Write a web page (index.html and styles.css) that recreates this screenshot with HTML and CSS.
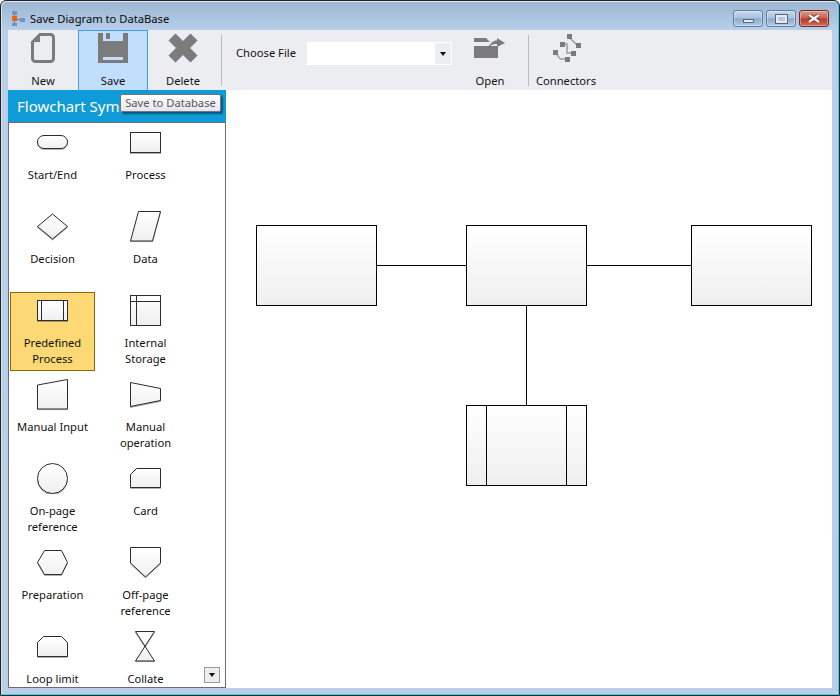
FILE: index.html
```html
<!DOCTYPE html>
<html lang="en">
<head>
<meta charset="utf-8">
<title>Save Diagram to DataBase</title>
<link rel="stylesheet" href="styles.css">
</head>
<body>
<div class="window">
  <header class="titlebar">
    <svg class="app-icon" width="16" height="16" viewBox="0 0 16 16">
      <path class="app-line" d="M3.5 3v10M5 8.5h5"/>
      <rect class="app-blue" x="1" y="0" width="5" height="4"/>
      <rect class="app-orange" x="1" y="5" width="5" height="5"/>
      <rect class="app-blue" x="9" y="7" width="5" height="4"/>
      <rect class="app-blue" x="1" y="12" width="5" height="3"/>
    </svg>
    <span class="title">Save Diagram to DataBase</span>
    <div class="controls">
      <button class="ctl ctl-min"><span class="glyph-min"></span></button>
      <button class="ctl ctl-max"><span class="glyph-max"></span></button>
      <button class="ctl ctl-close">
        <svg width="14" height="9" viewBox="0 0 14 9"><path class="glyph-x-shade" d="M2 1l10 7M12 1L2 8"/><path class="glyph-x" d="M2 1l10 7M12 1L2 8"/></svg>
      </button>
    </div>
  </header>

  <div class="toolbar">
    <div class="tool">
      <svg class="tool-icon" width="32" height="32" viewBox="0 0 32 32">
        <path class="ico-outline" d="M13 2.5H23.5a3 3 0 0 1 3 3V26.500a3 3 0 0 1-3 3H8.500a3 3 0 0 1-3-3V10Z"/>
        <path class="ico-fill" d="M13 2V10H5Z"/>
      </svg>
      <span class="tool-label">New</span>
    </div>
    <div class="tool tool-active">
      <svg class="tool-icon" width="32" height="32" viewBox="0 0 32 32">
        <path class="ico-fill ico-even" d="M1 1H31V31H1ZM6 1V9H26V1H13V7H9V1ZM6 25V28H26V25Z"/>
      </svg>
      <span class="tool-label">Save</span>
    </div>
    <div class="tool">
      <svg class="tool-icon" width="32" height="32" viewBox="0 0 32 32">
        <path class="ico-x" d="M5 5L27 27M27 5L5 27"/>
      </svg>
      <span class="tool-label">Delete</span>
    </div>
    <div class="sep"></div>
    <span class="choose">Choose File</span>
    <div class="combo"><span class="combo-text"></span><span class="combo-btn"><span class="caret"></span></span></div>
    <div class="tool tool-open">
      <svg class="tool-icon" width="32" height="32" viewBox="0 0 32 32">
        <path class="ico-fill" d="M0 6H12L15 9H17L14 10H0Z"/>
        <path class="ico-fill" d="M0 14H15C15.500 12 16 11.500 17 14H24V26H0Z"/>
        <path class="ico-fill" d="M16 14C17 10 20 8.500 23 8.500V6L31 11L23 15V12C20 12 18 12.500 16 14Z"/>
      </svg>
      <span class="tool-label">Open</span>
    </div>
    <div class="sep sep-2"></div>
    <div class="tool tool-conn">
      <svg class="tool-icon" width="32" height="32" viewBox="0 0 32 32">
        <path class="ico-link" d="M19 5L28 14M12 12H17V21H23M5 21C8 21 8 27 11 27H17"/>
        <rect class="ico-fill" x="17" y="2" width="5" height="5"/>
        <rect class="ico-fill" x="26" y="11" width="5" height="5"/>
        <rect class="ico-fill" x="10" y="10" width="5" height="5"/>
        <rect class="ico-fill" x="21" y="19" width="5" height="5"/>
        <rect class="ico-fill" x="3" y="18" width="5" height="5"/>
        <rect class="ico-fill" x="15" y="25" width="5" height="5"/>
      </svg>
      <span class="tool-label">Connectors</span>
    </div>
  </div>

  <div class="workspace">
    <aside class="panel">
      <div class="panel-head">Flowchart Symbols</div>
      <div class="panel-list">
        <div class="symbols">
          <div class="sym"><svg class="sym-icon" width="33" height="32" viewBox="0 0 33 32"><rect class="shape" x="1.500" y="9.500" width="30" height="13" rx="6.500"/></svg><span class="sym-label">Start/End</span></div>
          <div class="sym"><svg class="sym-icon" width="33" height="32" viewBox="0 0 33 32"><rect class="shape" x="1.500" y="6.500" width="30" height="20"/></svg><span class="sym-label">Process</span></div>
          <div class="sym"><svg class="sym-icon" width="33" height="32" viewBox="0 0 33 32"><polygon class="shape" points="16.500,4 31.500,16.500 16.500,29 1.500,16.500"/></svg><span class="sym-label">Decision</span></div>
          <div class="sym"><svg class="sym-icon" width="33" height="32" viewBox="0 0 33 32"><polygon class="shape" points="9.500,1.500 31.500,1.500 23.500,31 1.500,31"/></svg><span class="sym-label">Data</span></div>
          <div class="sym sym-active"><svg class="sym-icon" width="33" height="32" viewBox="0 0 33 32"><rect class="shape" x="1.500" y="6.500" width="30" height="20"/><path class="inner" d="M5.500 6.500V26.500M27.500 6.500V26.500"/></svg><span class="sym-label">Predefined Process</span></div>
          <div class="sym"><svg class="sym-icon" width="33" height="32" viewBox="0 0 33 32"><rect class="shape" x="1.500" y="1.500" width="30" height="30"/><path class="inner" d="M7.500 1.500V31.500M1.500 7.500H31.500"/></svg><span class="sym-label">Internal Storage</span></div>
          <div class="sym"><svg class="sym-icon" width="33" height="32" viewBox="0 0 33 32"><polygon class="shape" points="1.500,7 31.500,1.500 31.500,31 1.500,31"/></svg><span class="sym-label">Manual Input</span></div>
          <div class="sym"><svg class="sym-icon" width="33" height="32" viewBox="0 0 33 32"><polygon class="shape" points="1.500,4.500 31.500,10.500 31.500,22.500 1.500,28.500"/></svg><span class="sym-label">Manual operation</span></div>
          <div class="sym"><svg class="sym-icon" width="33" height="32" viewBox="0 0 33 32"><circle class="shape" cx="16.500" cy="16.500" r="15"/></svg><span class="sym-label">On-page reference</span></div>
          <div class="sym"><svg class="sym-icon" width="33" height="32" viewBox="0 0 33 32"><polygon class="shape" points="7.500,6.500 31.500,6.500 31.500,25.500 1.500,25.500 1.500,12.500"/></svg><span class="sym-label">Card</span></div>
          <div class="sym"><svg class="sym-icon" width="33" height="32" viewBox="0 0 33 32"><polygon class="shape" points="8.500,4.500 25.500,4.500 31.500,16.500 25.500,28.500 8.500,28.500 1.500,16.500"/></svg><span class="sym-label">Preparation</span></div>
          <div class="sym"><svg class="sym-icon" width="33" height="32" viewBox="0 0 33 32"><polygon class="shape" points="1.500,1.500 31.500,1.500 31.500,17 16.500,31 1.500,17"/></svg><span class="sym-label">Off-page reference</span></div>
          <div class="sym"><svg class="sym-icon" width="33" height="32" viewBox="0 0 33 32"><polygon class="shape" points="7.500,6.500 25.500,6.500 31.500,12.500 31.500,26.500 1.500,26.500 1.500,12.500"/></svg><span class="sym-label">Loop limit</span></div>
          <div class="sym"><svg class="sym-icon" width="33" height="32" viewBox="0 0 33 32"><polygon class="shape" points="6.500,1.500 25.500,1.500 6.500,31 25.500,31"/></svg><span class="sym-label">Collate</span></div>
        </div>
        <button class="scroll-down"><span class="caret"></span></button>
      </div>
    </aside>
    <main class="canvas">
      <svg class="diagram" width="606" height="598" viewBox="226 90 606 598">
        <defs>
          <linearGradient id="nodeFill" x1="0" y1="0" x2="0" y2="1">
            <stop offset="0" stop-color="#ffffff"/>
            <stop offset="1" stop-color="#efefef"/>
          </linearGradient>
        </defs>
        <path class="link" d="M376 265.500H466M586 265.500H691M526.500 305V405"/>
        <rect class="node" x="256.500" y="225.500" width="120" height="80"/>
        <rect class="node" x="466.500" y="225.500" width="120" height="80"/>
        <rect class="node" x="691.500" y="225.500" width="120" height="80"/>
        <rect class="node" x="466.500" y="405.500" width="120" height="80"/>
        <path class="link" d="M486.500 405.500V485.500M566.500 405.500V485.500"/>
      </svg>
    </main>
  </div>

  <div class="tooltip">Save to Database</div>
</div>
</body>
</html>
```

FILE: styles.css
```css
* { box-sizing: border-box; }
html, body { margin: 0; padding: 0; background: #fff; }
body { width: 840px; height: 696px; overflow: hidden; font-family: "Noto Sans", "Open Sans", sans-serif; font-size: 11.2px; color: #111; }

.window {
  position: relative;
  width: 840px;
  height: 696px;
  display: flex;
  flex-direction: column;
  padding: 0 7px 7px;
  border: 1px solid #222;
  border-radius: 6px 6px 0 0;
  background: linear-gradient(#9bb5d2 0, #b8d0ea 30px, #b9cfe9 100%);
  box-shadow: inset -1px -1px 0 #34d6ea, inset 1px 1px 0 #d9e5f1;
}

.titlebar { height: 29px; flex: none; display: flex; align-items: flex-start; padding-top: 9px; }
.app-icon { margin: 1px 3px 0 3px; flex: none; }
.app-blue { fill: #6d93c8; }
.app-orange { fill: #e8650f; }
.app-line { fill: none; stroke: #6a7a90; stroke-width: 1; }
.title { line-height: 17px; font-size: 11.2px; color: #0a0a0a; }
.controls { margin-left: auto; margin-right: 3px; display: flex; gap: 3px; }
.ctl {
  width: 30px; height: 17px; padding: 0; margin: 0;
  display: flex; align-items: center; justify-content: center;
  border: 1px solid #5f7ea3; border-radius: 3px;
  background: linear-gradient(#c6d7ea 0, #a9c1dd 48%, #8aa8cb 52%, #b3cbe5 100%);
  box-shadow: inset 0 0 0 1px rgba(255,255,255,.35);
}
.ctl-close { border-color: #6f2a22; background: linear-gradient(#dc9c8e 0, #c9604e 48%, #b53a28 52%, #cf6f55 100%); }
.glyph-min { display: block; width: 11px; height: 4px; margin-top: 5px; background: #e4e9f1; border: 1px solid #55677f; }
.glyph-max { display: block; width: 11px; height: 8px; background: #b5c9e0; border: 2px solid #e6ebf2; outline: 1px solid #55677f; outline-offset: -0.5px; }
.glyph-x { fill: none; stroke: #f3f3f3; stroke-width: 2.5; }
.glyph-x-shade { fill: none; stroke: #6b2a22; stroke-width: 4; }

.toolbar { height: 60px; flex: none; display: flex; align-items: stretch; background: #ecedf0; }
.tool { width: 70px; flex: none; display: flex; flex-direction: column; align-items: center; padding-top: 2px; border: 1px solid transparent; border-bottom: 0; }
.tool-active { background: #c1dffc; border-color: #3d9eea; }
.tool-icon { display: block; flex: none; margin-top: -1px; }
.tool-label { margin-top: 9px; line-height: 16px; white-space: nowrap; }
.ico-fill { fill: #7b7b7b; }
.ico-even { fill-rule: evenodd; }
.ico-outline { fill: none; stroke: #7b7b7b; stroke-width: 3; }
.ico-x { fill: none; stroke: #7b7b7b; stroke-width: 10; }
.ico-link { fill: none; stroke: #9a9a9a; stroke-width: 1.500; }

.sep { width: 1px; flex: none; margin: 5px 0 4px 3px; background: #bcbcbc; }
.sep-2 { margin-left: 18px; }
.choose { margin: 15px 0 0 14px; width: 71px; flex: none; line-height: 16px; white-space: nowrap; }
.combo { margin: 12px 0 0 0; width: 145px; height: 23px; flex: none; display: flex; background: #fff; border: 1px solid #fff; }
.combo-text { flex: 1; }
.combo-btn { width: 16px; display: flex; align-items: center; justify-content: center; background: #ecedf0; }
.caret { display: block; width: 0; height: 0; border-left: 3.5px solid transparent; border-right: 3.5px solid transparent; border-top: 4px solid #111; }
.tool-open { width: 40px; margin-left: 18px; }
.tool-conn { width: 74px; margin-left: 0; }

.workspace { flex: 1; min-height: 0; display: flex; background: #fff; }
.panel { width: 218px; flex: none; display: flex; flex-direction: column; }
.panel-head { height: 32px; flex: none; padding-left: 9px; line-height: 32px; font-size: 15px; color: #fff; background: #0f9bd8; white-space: nowrap; }
.panel-list { position: relative; flex: 1; min-height: 0; overflow: hidden; padding: 1px; border: 1px solid #6d6d6d; background: #fff; }
.symbols { display: grid; grid-template-columns: 85px 85px; column-gap: 8px; grid-auto-rows: 79px; row-gap: 5px; }
.sym { display: flex; flex-direction: column; align-items: center; padding-top: 2px; text-align: center; border: 1px solid transparent; margin: 0; }
.sym-active { background: #fcd975; border-color: #8f6a0a; }
.sym-icon { display: block; flex: none; margin-top: -1px; margin-left: 0; }
.sym-label { margin-top: 9px; line-height: 16px; max-width: 76px; }
.shape { fill: url(#nodeFill); stroke: #2c2c2c; stroke-width: 1; filter: drop-shadow(0 1px 0 rgba(0,0,0,.3)); }
.inner { fill: none; stroke: #2c2c2c; stroke-width: 1; }
.scroll-down {
  position: absolute; right: 5px; bottom: 4px; width: 16px; height: 16px; padding: 0;
  display: flex; align-items: center; justify-content: center;
  background: #eeeeee; border: 1px solid #9a9a9a;
}

.canvas { flex: 1; min-width: 0; background: #fff; }
.diagram { display: block; }
.node { fill: url(#nodeFill); stroke: #000; stroke-width: 1; }
.link { fill: none; stroke: #000; stroke-width: 1; }

.tooltip {
  position: absolute; left: 119px; top: 93px; width: 101px; height: 18px;
  line-height: 16px; text-align: center; color: #575757; white-space: nowrap;
  background: linear-gradient(#ffffff, #e4e5f0);
  border: 1px solid #767676; border-radius: 2px;
  box-shadow: 2px 2px 2px rgba(0,0,0,.45);
}
```
